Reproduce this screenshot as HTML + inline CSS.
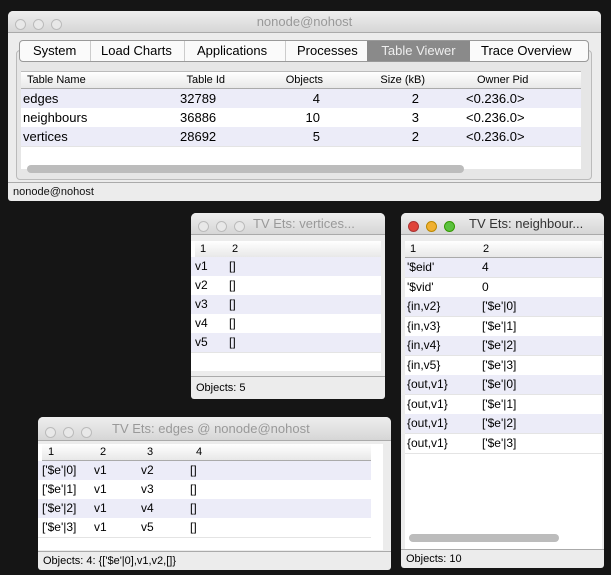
<!DOCTYPE html><html><head><style>
body{margin:0;width:611px;height:575px;background:#151515;position:relative;overflow:hidden;font-family:"Liberation Sans",sans-serif;}
.w{position:absolute;background:#ececec;border-radius:5px 5px 3px 3px;overflow:hidden}
.tb{height:21px;background:linear-gradient(#eee,#d6d6d6);border-bottom:1px solid #aaa;position:relative;font-size:13px;color:#999;line-height:21px}
.tb .t{position:absolute;left:0;right:0;text-align:center}
.dots{position:absolute;left:7px;top:4px}
.dots i{display:inline-block;width:11px;height:11px;border-radius:50%;border:1px solid #bbb;background:#e8e8e8;margin-right:7px;box-sizing:border-box}
.abs{position:absolute}
.row{position:absolute;left:0;right:0;height:19px;font-size:12px;line-height:19px;border-bottom:1px solid #e4e4e4}
.row:nth-child(odd){background:#ececf8}
.row span,.hd span{position:absolute}
.hd{position:absolute;left:0;right:0;height:16px;background:linear-gradient(#fff,#e8e8e8);border-bottom:1px solid #aaa;font-size:11px;line-height:16px}
.st{position:absolute;left:0;right:0;bottom:0;font-size:11px;border-top:1px solid #aaa;padding-left:5px}
.sb{position:absolute;height:8px;border-radius:4px;background:#bcbcbc}
.r{text-align:right}
</style></head><body>

<!-- main -->
<div class="w" style="left:8px;top:11px;width:593px;height:190px">
<div class="tb"><div class="dots"><i></i><i></i><i></i></div><div class="t">nonode@nohost</div></div>
<div class="abs" style="left:8px;top:39px;width:574px;height:128px;border:1px solid #bbb;border-radius:4px;background:#e6e6e6"></div>
<div class="abs" style="left:11px;top:29px;width:568px;height:20px;border:1px solid #999;border-radius:4px;background:#fafafa;font-size:13px;line-height:20px">
<span class="abs" style="left:13px">System</span>
<span class="abs" style="left:70px;border-left:1px solid #ccc;padding-left:10px;height:20px">Load Charts</span>
<span class="abs" style="left:164px;border-left:1px solid #ccc;padding-left:12px;height:20px">Applications</span>
<span class="abs" style="left:265px;border-left:1px solid #ccc;padding-left:11px;height:20px">Processes</span>
<span class="abs" style="left:347px;width:103px;background:#8a8a8a;color:#eee;text-align:center;height:20px">Table Viewer</span>
<span class="abs" style="left:461px">Trace Overview</span>
</div>
<div class="abs" style="left:13px;top:60px;width:560px;height:97px;background:#fff;border-top:1px solid #bbb">
<div class="hd" style="top:0"><span style="left:6px">Table Name</span><span class="r" style="right:356px">Table Id</span><span class="r" style="right:258px">Objects</span><span class="r" style="right:156px">Size (kB)</span><span style="left:456px">Owner Pid</span></div>
<div style="position:absolute;top:17px;left:0;right:0">
<div class="row" style="top:0;font-size:13px"><span style="left:2px">edges</span><span style="left:159px">32789</span><span class="r" style="right:261px">4</span><span class="r" style="right:162px">2</span><span style="left:445px">&lt;0.236.0&gt;</span></div>
<div class="row" style="top:19px;font-size:13px;background:#fff"><span style="left:2px">neighbours</span><span style="left:159px">36886</span><span class="r" style="right:261px">10</span><span class="r" style="right:162px">3</span><span style="left:445px">&lt;0.236.0&gt;</span></div>
<div class="row" style="top:38px;font-size:13px"><span style="left:2px">vertices</span><span style="left:159px">28692</span><span class="r" style="right:261px">5</span><span class="r" style="right:162px">2</span><span style="left:445px">&lt;0.236.0&gt;</span></div>
</div>
<div class="sb" style="left:6px;top:93px;width:437px"></div>
</div>
<div class="st" style="height:18px;line-height:18px;color:#111">nonode@nohost</div>
</div>

<!-- vertices -->
<div class="w" style="left:191px;top:213px;width:194px;height:186px">
<div class="tb"><div class="dots"><i></i><i></i><i></i></div><div class="t" style="left:62px;text-align:left">TV Ets: vertices...</div></div>
<div class="abs" style="left:0;top:28px;width:190px;height:130px;background:#fff">
<div class="hd" style="left:4px"><span style="left:5px">1</span><span style="left:37px">2</span></div>
<div style="position:absolute;top:16px;left:0;right:0">
<div class="row" style="top:0"><span style="left:4px">v1</span><span style="left:38px">[]</span></div>
<div class="row" style="top:19px;background:#fff"><span style="left:4px">v2</span><span style="left:38px">[]</span></div>
<div class="row" style="top:38px"><span style="left:4px">v3</span><span style="left:38px">[]</span></div>
<div class="row" style="top:57px;background:#fff"><span style="left:4px">v4</span><span style="left:38px">[]</span></div>
<div class="row" style="top:76px"><span style="left:4px">v5</span><span style="left:38px">[]</span></div>
</div></div>
<div class="st" style="height:22px;line-height:22px">Objects: 5</div>
</div>

<!-- neighbours -->
<div class="w" style="left:401px;top:213px;width:203px;height:355px">
<div class="tb" style="color:#333"><div class="dots"><i style="background:#e0443a;border-color:#a33"></i><i style="background:#f0b030;border-color:#b80"></i><i style="background:#5bc13e;border-color:#390"></i></div><div class="t" style="left:68px;text-align:left">TV Ets: neighbour...</div></div>
<div class="abs" style="left:4px;top:28px;width:197px;height:308px;background:#fff">
<div class="hd"><span style="left:5px">1</span><span style="left:78px">2</span></div>
<div style="position:absolute;top:17px;left:0;right:0">
<div class="row" style="top:0"><span style="left:2px">'$eid'</span><span style="left:77px">4</span></div>
<div class="row" style="top:19.5px;background:#fff"><span style="left:2px">'$vid'</span><span style="left:77px">0</span></div>
<div class="row" style="top:39px"><span style="left:2px">{in,v2}</span><span style="left:77px">['$e'|0]</span></div>
<div class="row" style="top:58.5px;background:#fff"><span style="left:2px">{in,v3}</span><span style="left:77px">['$e'|1]</span></div>
<div class="row" style="top:78px"><span style="left:2px">{in,v4}</span><span style="left:77px">['$e'|2]</span></div>
<div class="row" style="top:97.5px;background:#fff"><span style="left:2px">{in,v5}</span><span style="left:77px">['$e'|3]</span></div>
<div class="row" style="top:117px"><span style="left:2px">{out,v1}</span><span style="left:77px">['$e'|0]</span></div>
<div class="row" style="top:136.5px;background:#fff"><span style="left:2px">{out,v1}</span><span style="left:77px">['$e'|1]</span></div>
<div class="row" style="top:156px"><span style="left:2px">{out,v1}</span><span style="left:77px">['$e'|2]</span></div>
<div class="row" style="top:175.5px;background:#fff"><span style="left:2px">{out,v1}</span><span style="left:77px">['$e'|3]</span></div>
</div>
<div class="sb" style="left:4px;top:293px;width:150px"></div>
</div>
<div class="st" style="height:18px;line-height:18px">Objects: 10</div>
</div>

<!-- edges -->
<div class="w" style="left:38px;top:417px;width:353px;height:153px">
<div class="tb" style="height:23px;line-height:23px"><div class="dots" style="top:5px"><i></i><i></i><i></i></div><div class="t" style="left:74px;text-align:left">TV Ets: edges @ nonode@nohost</div></div>
<div class="abs" style="left:0;top:27px;width:345px;height:106px;background:#fff">
<div class="hd" style="left:4px;right:12px"><span style="left:6px">1</span><span style="left:58px">2</span><span style="left:105px">3</span><span style="left:154px">4</span></div>
<div style="position:absolute;top:17px;left:0;right:12px">
<div class="row" style="top:0"><span style="left:4px">['$e'|0]</span><span style="left:56px">v1</span><span style="left:103px">v2</span><span style="left:152px">[]</span></div>
<div class="row" style="top:19px;background:#fff"><span style="left:4px">['$e'|1]</span><span style="left:56px">v1</span><span style="left:103px">v3</span><span style="left:152px">[]</span></div>
<div class="row" style="top:38px"><span style="left:4px">['$e'|2]</span><span style="left:56px">v1</span><span style="left:103px">v4</span><span style="left:152px">[]</span></div>
<div class="row" style="top:57px;background:#fff"><span style="left:4px">['$e'|3]</span><span style="left:56px">v1</span><span style="left:103px">v5</span><span style="left:152px">[]</span></div>
</div></div>
<div class="st" style="height:18px;line-height:18px">Objects: 4: {['$e'|0],v1,v2,[]}</div>
</div>
</body></html>
